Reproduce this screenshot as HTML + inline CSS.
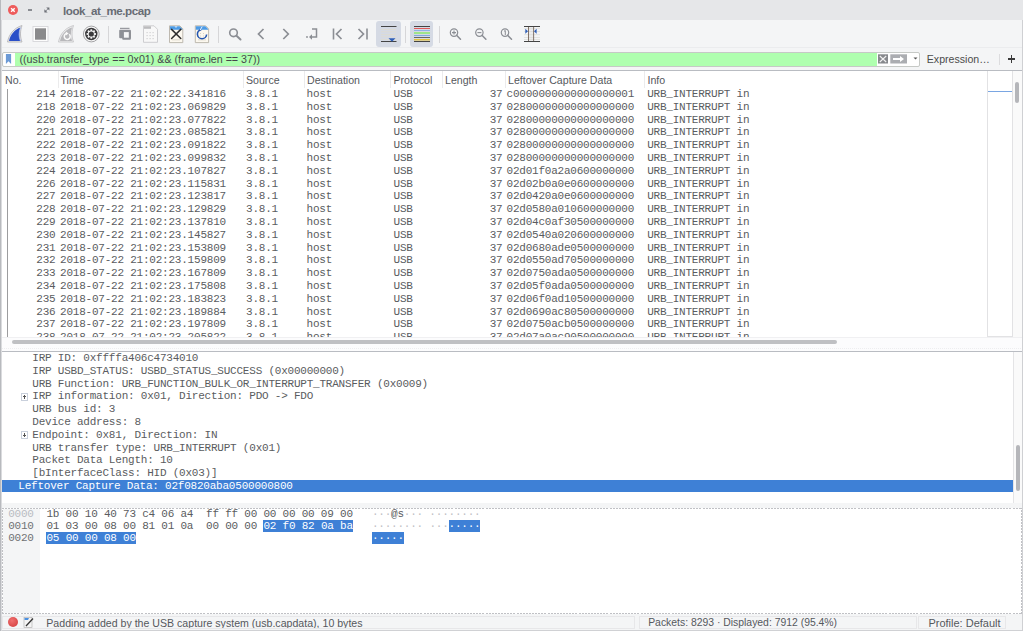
<!DOCTYPE html>
<html><head><meta charset="utf-8">
<style>
*{margin:0;padding:0;box-sizing:border-box}
html,body{width:1023px;height:631px;overflow:hidden;background:#f4f5f6;font-family:"Liberation Sans",sans-serif;color:#4c4c4c}
.abs{position:absolute}
#title{position:absolute;left:0;top:0;width:1023px;height:20px;background:#e6e7e9}
#title .t{position:absolute;left:63px;top:2.5px;font-size:11.6px;line-height:15px;font-weight:bold;color:#686c74;letter-spacing:-0.45px}
#leftedge{position:absolute;left:0;top:0;width:1px;height:631px;background:#b8babe}
#leftedge2{position:absolute;left:1px;top:20px;width:1px;height:611px;background:#dadbde}
#toolbar{position:absolute;left:0;top:20px;width:1023px;height:28px;background:#f4f5f6;border-bottom:1px solid #ebecee}
.sep{position:absolute;width:1px;background:#d6d6d8}
.tog{position:absolute;top:21px;height:26px;background:#d5dae4;border-radius:3px}
#fbar{position:absolute;left:0;top:48px;width:1023px;height:22px;background:#f4f5f6}
#fbox{position:absolute;left:2.2px;top:52.2px;width:918px;height:14.6px;border:1px solid #c6c9c6;border-radius:2px;background:#fff;overflow:hidden}
#fgreen{position:absolute;left:12px;top:0;width:862px;height:12.6px;background:#afffaf}
#ftext{position:absolute;left:19.5px;top:52.2px;font-size:10.7px;line-height:14px;color:#45474b;white-space:pre}
#plist{position:absolute;left:1.5px;top:71px;width:1020.5px;height:267px;background:#fff;overflow:hidden}
#plborder{position:absolute;left:0;top:70px;width:1023px;height:1px;background:#b9bcc2}
.hd{position:absolute;top:71.5px;font-size:10.6px;line-height:16px;color:#55585d;white-space:pre}
.hsep{position:absolute;top:71px;height:17px;width:1px;background:#ebebec}
.pr{position:absolute;left:0;height:12.8px;width:986px;font-family:"Liberation Mono",monospace;font-size:11px;letter-spacing:-0.22px;line-height:12.8px;color:#5a5c60;white-space:pre}
.pr .c{position:absolute;top:0}
.no{left:0;width:55.5px;text-align:right}
.tm{left:60px}
.src{left:246px}
.dst{left:306.5px}
.pro{left:393.5px}
.len{left:441px;width:61.5px;text-align:right}
.dat{left:506.5px}
.inf{left:647.2px}
#minimap{position:absolute;left:987px;top:71px;width:25.5px;height:265.5px;border-left:1px solid #e2e2e4;border-right:1px solid #e2e2e4;border-bottom:1px solid #e2e2e4;background:#fff}
#mmline{position:absolute;left:987.5px;top:91px;width:24.5px;height:1px;background:#7aa6e2}
#vsb{position:absolute;left:1013px;top:71px;width:8.5px;height:266px;background:#fafafa}
#vthumb{position:absolute;left:1015.3px;top:81.7px;width:4px;height:21px;background:#b5b6ba;border-radius:2px}
#hsb{position:absolute;left:1.5px;top:337px;width:1020px;height:14px;background:#fcfcfd;border-top:1px solid #f0f0f2}
#hthumb{position:absolute;left:12px;top:339.9px;width:825px;height:4px;background:#bfc0c3;border-radius:2px}
#split1{position:absolute;left:0;top:347.5px;width:1023px;height:1.5px;border-top:1px dotted #eeeef0}
#dborder{position:absolute;left:0;top:351px;width:1023px;height:1px;background:#b9bcc2}
#dpane{position:absolute;left:1.5px;top:352px;width:1020px;height:151px;background:#fff;overflow:hidden}
.dr{position:absolute;left:32.3px;height:12.8px;font-family:"Liberation Mono",monospace;font-size:11px;letter-spacing:-0.22px;line-height:12.8px;color:#5a5c60;white-space:pre}
.exp{position:absolute;left:20.5px;width:7.5px;height:7.5px;border:1px solid #c9d0dc;background:#fff}
.exp:before{content:"";position:absolute;left:1.2px;top:2.2px;width:3.5px;height:1px;background:#555}
.exp:after{content:"";position:absolute;left:2.4px;top:1px;width:1px;height:3.5px;background:#555}
#selrow{position:absolute;left:1.5px;top:480px;width:1011px;height:12px;background:#3e80d6}
#seltext{position:absolute;left:18.3px;top:479.6px;font-family:"Liberation Mono",monospace;font-size:11px;letter-spacing:-0.22px;line-height:12.8px;color:#fff;white-space:pre}
#dvsb{position:absolute;left:1012.5px;top:352px;width:9px;height:151px;background:#fafafa;border-left:1px solid #e4e4e6}
#dthumb{position:absolute;left:1015.8px;top:445px;width:4px;height:46px;background:#b5b6ba;border-radius:2px}
#dbot{position:absolute;left:1.5px;top:503px;width:1020px;height:4px;background:#f4f5f6}
#hexpane{position:absolute;left:2px;top:508px;width:1020px;height:106px;background:#fff;
background-image:repeating-linear-gradient(90deg,#c0c1c5 0 2px,transparent 2px 3.1px),repeating-linear-gradient(90deg,#c0c1c5 0 2px,transparent 2px 3.1px),repeating-linear-gradient(0deg,#c0c1c5 0 2px,transparent 2px 3.1px),repeating-linear-gradient(0deg,#c0c1c5 0 2px,transparent 2px 3.1px);
background-size:100% 1px,100% 1px,1px 100%,1px 100%;background-position:0 0,0 100%,0 0,100% 0;background-repeat:no-repeat}
#offcol{position:absolute;left:3px;top:509px;width:37px;height:104px;background:#f4f5f6}
.hx{position:absolute;font-family:"Liberation Mono",monospace;font-size:11px;letter-spacing:-0.22px;line-height:12px;color:#5a5c60;white-space:pre}
.hl{background:#3e80d6;color:#fff}
.off0{color:#b9bcc2}
.off{color:#707274}
.dot{color:#c0c0c4}
#status{position:absolute;left:0;top:614px;width:1023px;height:17px;background:#f4f5f6;border-bottom:1px solid #d0d1d4}
#status .t{position:absolute;top:1.2px;font-size:11px;line-height:16px;color:#55585d;white-space:pre}
.sbox{position:absolute;top:2px;height:12.5px;border:1px solid #e7e7e9}
</style></head><body>
<div id="title">
  <div class="abs" style="left:8.3px;top:5.2px;width:10px;height:10px;border-radius:50%;background:#ee5b5b"></div>
  <svg class="abs" style="left:0;top:0" width="20" height="20" viewBox="0 0 20 20"><path d="M11.1 8.2 L14.7 11.8 M14.7 8.2 L11.1 11.8" stroke="#fff" stroke-width="1.4"/></svg>
  
  <div class="abs" style="left:27.5px;top:9.4px;width:4px;height:1.5px;background:#8a8c92"></div>
  <svg class="abs" style="left:44px;top:7px" width="6" height="6" viewBox="0 0 6 6"><path d="M2.2 0.4 H5.4 V3.6 Z" fill="#6c6f76"/><path d="M0.4 2.2 V5.4 H3.6 Z" fill="#6c6f76"/><path d="M1.5 4.3 L4.3 1.5" stroke="#6c6f76" stroke-width="0.8"/></svg>
  <div class="t">look_at_me.pcap</div>
</div>
<div id="toolbar"></div>
<div id="fbar"></div>

<!-- toolbar icons -->
<svg class="abs" style="left:0;top:20px" width="560" height="28" viewBox="0 20 560 28">
  <!-- start shark fin -->
  <path d="M7.5 42 C9 34 14 28 22 25.5 C20 31 20 37 22 42 Z" fill="#e8e8ea" stroke="#b0b0b4" stroke-width="0.8"/>
  <path d="M9 41 C10.5 34 15 29.5 20.5 27.5 C19 32 19 37 20.5 41 Z" fill="#2a4fc8"/><path d="M20.3 28 C18.8 32 18.8 37 20.3 40.8" fill="none" stroke="#c8d4f0" stroke-width="0.7"/>
  <!-- stop -->
  <rect x="33" y="26.5" width="15" height="15" fill="#fdfdfd" stroke="#d6d6d9" stroke-width="0.9"/>
  <rect x="35" y="28.3" width="11" height="11.4" fill="#8a8a8c"/>
  <!-- restart fin -->
  <path d="M58.5 42 C60 34 65 28 73.5 25.5 C71.5 31 71.5 37 73.5 42 Z" fill="#eeeeef" stroke="#c0c0c3" stroke-width="0.8"/>
  <path d="M60 41 C61.5 34 66 29.5 72 27.5 C70.5 32 70.5 37 72 41 Z" fill="#b8b8bb"/>
  <path d="M69.2 34.2 A3 3 0 1 1 66.8 33.5" fill="none" stroke="#fafafa" stroke-width="1.5"/><path d="M65.8 31.6 L68.6 33.6 L65.8 35.4 Z" fill="#fafafa"/>
  <!-- gear -->
  <circle cx="91.3" cy="34" r="7.9" fill="#f7f7f7" stroke="#9a9a9c" stroke-width="0.9"/>
  <circle cx="91.3" cy="34" r="6.2" fill="#3a3a3c"/>
  <g fill="#f4f4f4" transform="translate(91.3 34)">
    <circle r="3.5"/>
    <rect x="-0.9" y="-4.7" width="1.8" height="9.4"/>
    <rect x="-0.9" y="-4.7" width="1.8" height="9.4" transform="rotate(45)"/>
    <rect x="-0.9" y="-4.7" width="1.8" height="9.4" transform="rotate(90)"/>
    <rect x="-0.9" y="-4.7" width="1.8" height="9.4" transform="rotate(135)"/>
  </g>
  <circle cx="91.3" cy="34" r="2.6" fill="#3a3a3c"/>
  <!-- open -->
  <rect x="120" y="27.8" width="9.5" height="1.1" fill="#8e9096"/>
  <rect x="119.2" y="29.7" width="11.7" height="8.5" rx="1" fill="#8e9096"/>
  <rect x="122.2" y="31" width="8.7" height="8.8" rx="1" fill="#8e9096"/>
  <rect x="123.9" y="32.1" width="4.9" height="5.6" fill="#f6f6f7"/>
  <!-- save -->
  <path d="M143.5 25.8 H154 L157.5 29.3 V42.3 H143.5 Z" fill="#f8f8f8" stroke="#c4c4c6" stroke-width="0.8"/>
  <g fill="#d0d0d2"><rect x="146.5" y="32" width="1.2" height="1.2"/><rect x="149.5" y="32" width="1.2" height="1.2"/><rect x="152.5" y="32" width="1.2" height="1.2"/>
  <rect x="146.5" y="35" width="1.2" height="1.2"/><rect x="149.5" y="35" width="1.2" height="1.2"/><rect x="152.5" y="35" width="1.2" height="1.2"/>
  <rect x="146.5" y="38" width="1.2" height="1.2"/><rect x="149.5" y="38" width="1.2" height="1.2"/><rect x="152.5" y="38" width="1.2" height="1.2"/></g>
  <rect x="144" y="26.3" width="7" height="2.5" fill="#bbbbbd"/>
  <!-- close -->
  <path d="M169.5 25.8 H179.8 L182.8 28.8 V42.6 H169.5 Z" fill="#fcf8ef" stroke="#b7b2a8" stroke-width="0.9"/>
  <path d="M170 26.3 H179.6 L182.3 29 V29.8 H170 Z" fill="#4c9be6"/>
  <path d="M174.5 26.3 L176 28 L177.5 26.3 Z" fill="#fff" opacity="0.7"/>
  <g fill="#d8d4c8"><rect x="172" y="39.4" width="8" height="0.9"/><rect x="172" y="36.5" width="1" height="1"/><rect x="179" y="36.5" width="1" height="1"/></g>
  <path d="M171.6 29.4 L180.8 38.5 M180.8 29.4 L171.6 38.5" stroke="#2e2e2e" stroke-width="1.5" stroke-linecap="round"/>
  <!-- reload -->
  <path d="M195.3 25.8 H205.6 L208.6 28.8 V42.6 H195.3 Z" fill="#fcf8ef" stroke="#b7b2a8" stroke-width="0.9"/>
  <path d="M195.8 26.3 H205.4 L208.1 29 V29.8 H195.8 Z" fill="#4c9be6"/>
  <g fill="#d8d4c8"><rect x="198" y="39.4" width="8" height="0.9"/><rect x="200" y="33" width="1" height="1"/><rect x="203" y="33" width="1" height="1"/><rect x="200" y="35.5" width="1" height="1"/><rect x="203" y="35.5" width="1" height="1"/></g>
  <path d="M201.3 29.6 A4.6 4.6 0 1 0 206.6 34.5" fill="none" stroke="#2456b0" stroke-width="1.6"/>
  <path d="M200.2 30 L202.2 26.6" stroke="#e8f0ff" stroke-width="1"/>
  <!-- find -->
  <circle cx="233.5" cy="32.8" r="3.8" fill="none" stroke="#8b8e94" stroke-width="1.6"/>
  <path d="M236.5 35.8 L240.5 39.5" stroke="#8b8e94" stroke-width="2" stroke-linecap="round"/>
  <!-- prev/next -->
  <path d="M263.5 29 L258.5 34 L263.5 39" fill="none" stroke="#8b8e94" stroke-width="1.7"/>
  <path d="M283.3 29 L288.3 34 L283.3 39" fill="none" stroke="#8b8e94" stroke-width="1.7"/>
  <!-- go to -->
  <circle cx="307" cy="37" r="0.9" fill="#8b8e94"/>
  <path d="M312 29 H316.5 V37 H310" fill="none" stroke="#8b8e94" stroke-width="1.5"/>
  <path d="M312 34.3 L309 37 L312 39.7 Z" fill="#8b8e94"/>
  <!-- first / last -->
  <path d="M333.5 28.5 V39.5" stroke="#8b8e94" stroke-width="1.6"/>
  <path d="M341.5 29 L336.5 34 L341.5 39" fill="none" stroke="#8b8e94" stroke-width="1.7"/>
  <path d="M367 28.5 V39.5" stroke="#8b8e94" stroke-width="1.6"/>
  <path d="M358.5 29 L363.5 34 L358.5 39" fill="none" stroke="#8b8e94" stroke-width="1.7"/>
</svg>
<div class="sep" style="left:108px;top:25.5px;height:17px"></div>
<div class="sep" style="left:218.3px;top:25.5px;height:17px"></div>
<div class="tog" style="left:376.3px;width:24.7px"></div>
<div class="sep" style="left:405px;top:25.5px;height:17px"></div>
<div class="tog" style="left:410.2px;width:23.1px"></div>
<div class="sep" style="left:438.5px;top:25.5px;height:17px"></div>
<svg class="abs" style="left:370px;top:20px" width="180" height="28" viewBox="370 20 180 28">
  <!-- autoscroll -->
  <rect x="381" y="26" width="15.5" height="1" fill="#444"/>
  <g fill="#e2dccb"><rect x="381" y="29" width="15" height="0.6"/><rect x="381" y="31.5" width="15" height="0.6"/><rect x="381" y="34" width="15" height="0.6"/><rect x="381" y="36.5" width="15" height="0.6"/><rect x="381" y="39" width="15" height="0.6"/></g>
  <rect x="381" y="41" width="15.5" height="1" fill="#444"/>
  <path d="M388.5 38.3 H395.5 L392 41.8 Z" fill="#2f5fb8"/>
  <!-- colorize -->
  <rect x="414" y="26" width="16" height="1" fill="#444"/>
  <rect x="414" y="28" width="16" height="1" fill="#e05a5a"/>
  <rect x="414" y="30" width="16" height="1" fill="#8fb4e6"/>
  <rect x="414" y="32" width="16" height="2" fill="#9ee58a"/>
  <rect x="414" y="35" width="16" height="1" fill="#7fa8e0"/>
  <rect x="414" y="37" width="16" height="1" fill="#666"/>
  <rect x="414" y="39" width="16" height="1.5" fill="#e3c23c"/>
  <rect x="414" y="41" width="16" height="1" fill="#444"/>
  <!-- zoom in -->
  <circle cx="454" cy="32.6" r="3.7" fill="none" stroke="#8b8e94" stroke-width="1.2"/>
  <path d="M452 32.6 H456 M454 30.6 V34.6" stroke="#8b8e94" stroke-width="1.1"/>
  <path d="M456.8 35.4 L460.5 39.3" stroke="#8b8e94" stroke-width="1.5" stroke-linecap="round"/>
  <!-- zoom out -->
  <circle cx="479.4" cy="32.6" r="3.7" fill="none" stroke="#8b8e94" stroke-width="1.2"/>
  <path d="M477.4 32.6 H481.4" stroke="#8b8e94" stroke-width="1.1"/>
  <path d="M482.2 35.4 L485.9 39.3" stroke="#8b8e94" stroke-width="1.5" stroke-linecap="round"/>
  <!-- zoom 1 -->
  <circle cx="505" cy="32.6" r="3.7" fill="none" stroke="#8b8e94" stroke-width="1.2"/>
  <path d="M504 31.3 L505.3 30.5 V35" fill="none" stroke="#8b8e94" stroke-width="1"/>
  <path d="M507.8 35.4 L511.5 39.3" stroke="#8b8e94" stroke-width="1.5" stroke-linecap="round"/>
  <!-- resize columns -->
  <rect x="524" y="26" width="16" height="1" fill="#444"/>
  <rect x="524" y="41" width="16" height="1" fill="#444"/>
  <rect x="528.8" y="27" width="4.6" height="14" fill="#ececec"/>
  <g fill="#d6d8d2"><rect x="524" y="28.5" width="16" height="0.6"/><rect x="524" y="31" width="16" height="0.6"/><rect x="524" y="34.5" width="16" height="0.6"/><rect x="524" y="37" width="16" height="0.6"/><rect x="524" y="39.2" width="16" height="0.6"/></g>
  <rect x="528" y="27" width="0.9" height="14" fill="#76665c"/>
  <rect x="533.2" y="27" width="0.9" height="14" fill="#76665c"/>
  <path d="M525.3 28.7 L528 31.2 L525.3 33.7 Z" fill="#2f5fb8"/>
  <path d="M536.6 28.7 L534 31.2 L536.6 33.7 Z" fill="#2f5fb8"/>
</svg>

<!-- filter bar -->
<div id="fbox"><div id="fgreen"></div></div>
<svg class="abs" style="left:4px;top:53px" width="12" height="13" viewBox="4 53 12 13">
  <path d="M5.9 54 H11.1 V64 L8.5 61.3 L5.9 64 Z" fill="#6c9ad6"/>
</svg>
<div id="ftext">((usb.transfer_type == 0x01) &amp;&amp; (frame.len == 37))</div>
<svg class="abs" style="left:876px;top:52px" width="50" height="16" viewBox="876 52 50 16">
  <rect x="878" y="54.3" width="10" height="9.2" fill="#86888c"/>
  <path d="M879.8 56 L886.2 62 M886.2 56 L879.8 62" stroke="#f2f2f2" stroke-width="1.1"/>
  <rect x="890.3" y="54.3" width="16.7" height="9.2" fill="#abadb1"/>
  <path d="M893 58 H900 V56 L904 59 L900 62 V60 H893 Z" fill="#fff"/>
  <path d="M913.5 57.5 H917.5 L915.5 59.5 Z" fill="#555"/>
</svg>
<div class="abs" style="left:926.8px;top:52px;font-size:10.6px;line-height:15px;color:#4c4c4c;white-space:pre">Expression…</div>
<div class="sep" style="left:998.5px;top:54px;height:11px;background:#dcdcde"></div>
<div class="abs" style="left:1007.6px;top:58.4px;width:7.6px;height:1.6px;background:#3a3a3a"></div><div class="abs" style="left:1010.6px;top:55.2px;width:1.6px;height:8px;background:#3a3a3a"></div>

<!-- packet list -->
<div id="plborder"></div>
<div id="plist"></div>
<div class="hd" style="left:5px">No.</div>
<div class="hsep" style="left:57.5px"></div>
<div class="hd" style="left:60.5px">Time</div>
<div class="hsep" style="left:242.5px"></div>
<div class="hd" style="left:246px">Source</div>
<div class="hsep" style="left:303.5px"></div>
<div class="hd" style="left:307px">Destination</div>
<div class="hsep" style="left:390px"></div>
<div class="hd" style="left:393.5px">Protocol</div>
<div class="hsep" style="left:441.5px"></div>
<div class="hd" style="left:445px">Length</div>
<div class="hsep" style="left:504.5px"></div>
<div class="hd" style="left:508px">Leftover Capture Data</div>
<div class="hsep" style="left:644px"></div>
<div class="hd" style="left:647.5px">Info</div>
<div class="abs" style="left:0;top:71px;width:1023px;height:266px;overflow:hidden">
<div class="abs" style="left:-0px;top:-71px;width:1023px;height:408px">
<div class="abs" style="left:7.2px;top:88.5px;width:1px;height:250px;background:#9c9c9e"></div>
<div class="pr" style="top:87.90px"><span class="c no">214</span><span class="c tm">2018-07-22 21:02:22.341816</span><span class="c src">3.8.1</span><span class="c dst">host</span><span class="c pro">USB</span><span class="c len">37</span><span class="c dat">c0000000000000000001</span><span class="c inf">URB_INTERRUPT in</span></div>
<div class="pr" style="top:100.70px"><span class="c no">218</span><span class="c tm">2018-07-22 21:02:23.069829</span><span class="c src">3.8.1</span><span class="c dst">host</span><span class="c pro">USB</span><span class="c len">37</span><span class="c dat">02800000000000000000</span><span class="c inf">URB_INTERRUPT in</span></div>
<div class="pr" style="top:113.50px"><span class="c no">220</span><span class="c tm">2018-07-22 21:02:23.077822</span><span class="c src">3.8.1</span><span class="c dst">host</span><span class="c pro">USB</span><span class="c len">37</span><span class="c dat">02800000000000000000</span><span class="c inf">URB_INTERRUPT in</span></div>
<div class="pr" style="top:126.30px"><span class="c no">221</span><span class="c tm">2018-07-22 21:02:23.085821</span><span class="c src">3.8.1</span><span class="c dst">host</span><span class="c pro">USB</span><span class="c len">37</span><span class="c dat">02800000000000000000</span><span class="c inf">URB_INTERRUPT in</span></div>
<div class="pr" style="top:139.10px"><span class="c no">222</span><span class="c tm">2018-07-22 21:02:23.091822</span><span class="c src">3.8.1</span><span class="c dst">host</span><span class="c pro">USB</span><span class="c len">37</span><span class="c dat">02800000000000000000</span><span class="c inf">URB_INTERRUPT in</span></div>
<div class="pr" style="top:151.90px"><span class="c no">223</span><span class="c tm">2018-07-22 21:02:23.099832</span><span class="c src">3.8.1</span><span class="c dst">host</span><span class="c pro">USB</span><span class="c len">37</span><span class="c dat">02800000000000000000</span><span class="c inf">URB_INTERRUPT in</span></div>
<div class="pr" style="top:164.70px"><span class="c no">224</span><span class="c tm">2018-07-22 21:02:23.107827</span><span class="c src">3.8.1</span><span class="c dst">host</span><span class="c pro">USB</span><span class="c len">37</span><span class="c dat">02d01f0a2a0600000000</span><span class="c inf">URB_INTERRUPT in</span></div>
<div class="pr" style="top:177.50px"><span class="c no">226</span><span class="c tm">2018-07-22 21:02:23.115831</span><span class="c src">3.8.1</span><span class="c dst">host</span><span class="c pro">USB</span><span class="c len">37</span><span class="c dat">02d02b0a0e0600000000</span><span class="c inf">URB_INTERRUPT in</span></div>
<div class="pr" style="top:190.30px"><span class="c no">227</span><span class="c tm">2018-07-22 21:02:23.123817</span><span class="c src">3.8.1</span><span class="c dst">host</span><span class="c pro">USB</span><span class="c len">37</span><span class="c dat">02d0420a0e0600000000</span><span class="c inf">URB_INTERRUPT in</span></div>
<div class="pr" style="top:203.10px"><span class="c no">228</span><span class="c tm">2018-07-22 21:02:23.129829</span><span class="c src">3.8.1</span><span class="c dst">host</span><span class="c pro">USB</span><span class="c len">37</span><span class="c dat">02d0580a010600000000</span><span class="c inf">URB_INTERRUPT in</span></div>
<div class="pr" style="top:215.90px"><span class="c no">229</span><span class="c tm">2018-07-22 21:02:23.137810</span><span class="c src">3.8.1</span><span class="c dst">host</span><span class="c pro">USB</span><span class="c len">37</span><span class="c dat">02d04c0af30500000000</span><span class="c inf">URB_INTERRUPT in</span></div>
<div class="pr" style="top:228.70px"><span class="c no">230</span><span class="c tm">2018-07-22 21:02:23.145827</span><span class="c src">3.8.1</span><span class="c dst">host</span><span class="c pro">USB</span><span class="c len">37</span><span class="c dat">02d0540a020600000000</span><span class="c inf">URB_INTERRUPT in</span></div>
<div class="pr" style="top:241.50px"><span class="c no">231</span><span class="c tm">2018-07-22 21:02:23.153809</span><span class="c src">3.8.1</span><span class="c dst">host</span><span class="c pro">USB</span><span class="c len">37</span><span class="c dat">02d0680ade0500000000</span><span class="c inf">URB_INTERRUPT in</span></div>
<div class="pr" style="top:254.30px"><span class="c no">232</span><span class="c tm">2018-07-22 21:02:23.159809</span><span class="c src">3.8.1</span><span class="c dst">host</span><span class="c pro">USB</span><span class="c len">37</span><span class="c dat">02d0550ad70500000000</span><span class="c inf">URB_INTERRUPT in</span></div>
<div class="pr" style="top:267.10px"><span class="c no">233</span><span class="c tm">2018-07-22 21:02:23.167809</span><span class="c src">3.8.1</span><span class="c dst">host</span><span class="c pro">USB</span><span class="c len">37</span><span class="c dat">02d0750ada0500000000</span><span class="c inf">URB_INTERRUPT in</span></div>
<div class="pr" style="top:279.90px"><span class="c no">234</span><span class="c tm">2018-07-22 21:02:23.175808</span><span class="c src">3.8.1</span><span class="c dst">host</span><span class="c pro">USB</span><span class="c len">37</span><span class="c dat">02d05f0ada0500000000</span><span class="c inf">URB_INTERRUPT in</span></div>
<div class="pr" style="top:292.70px"><span class="c no">235</span><span class="c tm">2018-07-22 21:02:23.183823</span><span class="c src">3.8.1</span><span class="c dst">host</span><span class="c pro">USB</span><span class="c len">37</span><span class="c dat">02d06f0ad10500000000</span><span class="c inf">URB_INTERRUPT in</span></div>
<div class="pr" style="top:305.50px"><span class="c no">236</span><span class="c tm">2018-07-22 21:02:23.189884</span><span class="c src">3.8.1</span><span class="c dst">host</span><span class="c pro">USB</span><span class="c len">37</span><span class="c dat">02d0690ac80500000000</span><span class="c inf">URB_INTERRUPT in</span></div>
<div class="pr" style="top:318.30px"><span class="c no">237</span><span class="c tm">2018-07-22 21:02:23.197809</span><span class="c src">3.8.1</span><span class="c dst">host</span><span class="c pro">USB</span><span class="c len">37</span><span class="c dat">02d0750acb0500000000</span><span class="c inf">URB_INTERRUPT in</span></div>
<div class="pr" style="top:331.10px"><span class="c no">238</span><span class="c tm">2018-07-22 21:02:23.205822</span><span class="c src">3.8.1</span><span class="c dst">host</span><span class="c pro">USB</span><span class="c len">37</span><span class="c dat">02d07a0ac90500000000</span><span class="c inf">URB_INTERRUPT in</span></div>
</div></div>
<div id="minimap"></div>
<div id="mmline"></div>
<div id="vsb"></div>
<div id="vthumb"></div>
<div id="hsb"></div>
<div id="hthumb"></div>
<div id="split1"></div>

<!-- details -->
<div id="dborder"></div>
<div id="dpane"></div>
<div class="dr" style="top:352.00px">IRP ID: 0xffffa406c4734010</div>
<div class="dr" style="top:364.80px">IRP USBD_STATUS: USBD_STATUS_SUCCESS (0x00000000)</div>
<div class="dr" style="top:377.60px">URB Function: URB_FUNCTION_BULK_OR_INTERRUPT_TRANSFER (0x0009)</div>
<div class="exp" style="top:393.00px"></div><div class="dr" style="top:390.40px">IRP information: 0x01, Direction: PDO -&gt; FDO</div>
<div class="dr" style="top:403.20px">URB bus id: 3</div>
<div class="dr" style="top:416.00px">Device address: 8</div>
<div class="exp" style="top:431.40px"></div><div class="dr" style="top:428.80px">Endpoint: 0x81, Direction: IN</div>
<div class="dr" style="top:441.60px">URB transfer type: URB_INTERRUPT (0x01)</div>
<div class="dr" style="top:454.40px">Packet Data Length: 10</div>
<div class="dr" style="top:467.20px">[bInterfaceClass: HID (0x03)]</div>
<div id="selrow"></div>
<div id="seltext">Leftover Capture Data: 02f0820aba0500000800</div>
<div id="dvsb"></div>
<div id="dthumb"></div>
<div id="dbot"></div>

<!-- hex -->
<div id="hexpane"></div>
<div id="offcol"></div>
<div class="hx" style="left:8.2px;top:508px"><span class="off0">0000</span>  1b 00 10 40 73 c4 06 a4  ff ff 00 00 00 00 09 00   <span class="dot">···</span>@s<span class="dot">··· ········</span></div>
<div class="hx" style="left:8.2px;top:520px"><span class="off">0010</span>  01 03 00 08 00 81 01 0a  00 00 00 <span class="hl">02 f0 82 0a ba</span>   <span class="dot">········ ···</span><span class="hl">·····</span></div>
<div class="hx" style="left:8.2px;top:532px"><span class="off">0020</span>  <span class="hl">05 00 00 08 00</span>                                     <span class="hl">·····</span></div>

<!-- status -->
<div id="status">
  <div class="abs" style="left:7.7px;top:3.4px;width:10px;height:10px;border-radius:50%;background:radial-gradient(circle at 40% 35%,#f07070,#d03a3a)"></div>
  <div class="t" style="left:46.3px;font-size:10.6px">Padding added by the USB capture system (usb.capdata), 10 bytes</div>
  <div class="sbox" style="left:2px;width:633px"></div><div class="sbox" style="left:639px;width:278px"></div><div class="sbox" style="left:918px;width:88px"></div><div class="t" style="left:648.2px;font-size:10.4px">Packets: 8293 · Displayed: 7912 (95.4%)</div>
  <div class="t" style="left:928.4px;font-size:11px">Profile: Default</div>
</div>
<svg class="abs" style="left:22px;top:615px" width="14" height="15" viewBox="22 615 14 15">
  <rect x="24" y="617.5" width="8" height="10" fill="#f4f4f4" stroke="#aaa" stroke-width="0.6"/>
  <path d="M24.5 618 H29 L28 620 H24.5 Z" fill="#4a90e2"/>
  <path d="M26 626 L33 618.5" stroke="#333" stroke-width="1.3"/>
</svg>
<div id="leftedge"></div><div id="leftedge2"></div>
<div class="abs" style="left:1022px;top:20px;width:1px;height:611px;background:#cfd0d3"></div>
</body></html>
